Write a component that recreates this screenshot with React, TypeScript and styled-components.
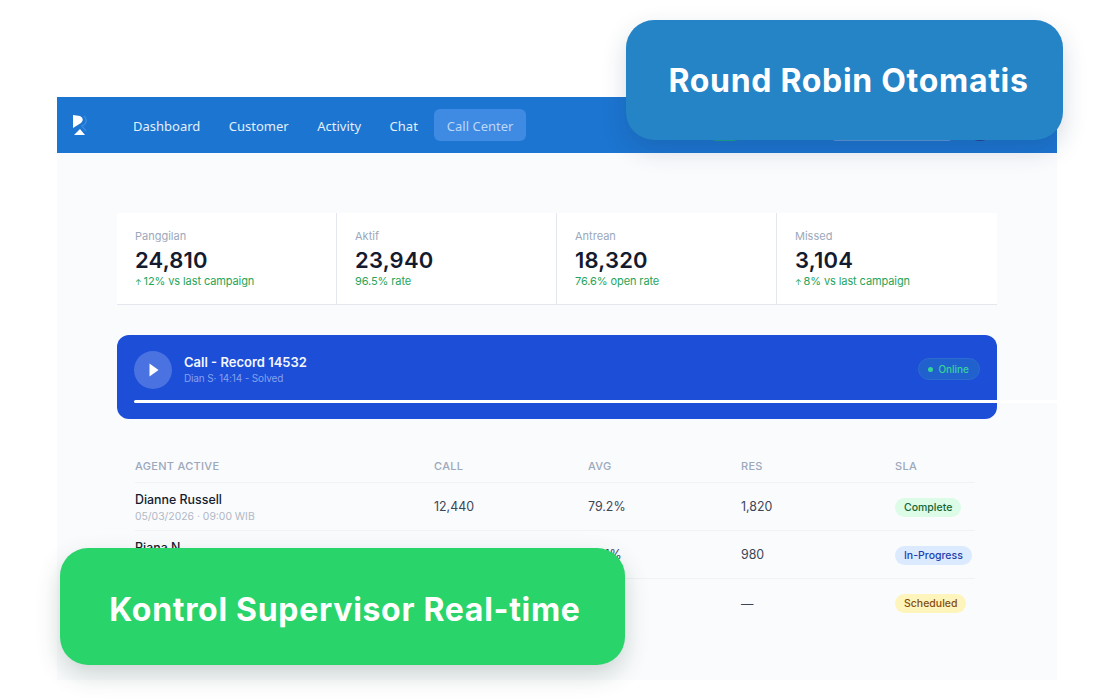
import React, { FC } from 'react';
import styled, { createGlobalStyle } from 'styled-components';

const GlobalStyle = createGlobalStyle`
  html, body {
    margin: 0;
    padding: 0;
    background: #ffffff;
  }
  * {
    box-sizing: border-box;
  }
`;

const Stage = styled.div`
  position: relative;
  width: 1120px;
  height: 700px;
  padding: 97px 63px 20px 57px;
  overflow: hidden;
  background: #ffffff;
  font-family: Inter, "Liberation Sans", sans-serif;
`;

const Frame = styled.div`
  height: 583px;
  background: #fafbfd;
  overflow: hidden;
`;

const NavBar = styled.div`
  display: flex;
  align-items: center;
  height: 56px;
  padding: 0 61px 0 15px;
  background: #1c75d0;
`;

const Logo = styled.svg`
  width: 16px;
  height: 22px;
  margin-right: 33px;
`;

const NavLinks = styled.nav`
  display: flex;
  align-items: center;
  gap: 4.5px;
`;

const NavLink = styled.a<{ $active?: boolean }>`
  height: 32px;
  padding: 0 ${(p) => (p.$active ? '12.5px' : '12px')};
  border-radius: 6px;
  background: ${(p) => (p.$active ? '#3f8be3' : 'transparent')};
  color: ${(p) => (p.$active ? '#bcd8f7' : '#e3effb')};
  font-family: "Noto Sans", sans-serif;
  font-size: 13px;
  line-height: 34px;
`;

const NavRight = styled.div`
  display: flex;
  align-items: center;
  margin-left: auto;
`;

const StatusChip = styled.div`
  width: 30px;
  height: 32px;
  border-radius: 6px;
  background: #1aa38f;
`;

const SearchBox = styled.div`
  width: 120px;
  height: 32px;
  margin-left: 92px;
  border-radius: 4px;
  background: #5d96dc;
`;

const Avatar = styled.div`
  width: 32px;
  height: 32px;
  margin-left: 12px;
  border-radius: 50%;
  background: #27408f;
`;

const Content = styled.main`
  padding: 60px 60px 0;
`;

const StatRow = styled.section`
  display: grid;
  grid-template-columns: repeat(4, 1fr);
  height: 92px;
  background: #ffffff;
  border-bottom: 1px solid #e4e8ee;
`;

const StatCard = styled.div`
  padding: 16px 18px 0;
  border-right: 1px solid #e4e8ee;
  &:last-child {
    border-right: 0;
  }
`;

const StatLabel = styled.div`
  color: #9ca8bb;
  font-size: 11px;
  line-height: 14px;
`;

const StatValue = styled.div`
  margin-top: 4px;
  color: #141b2e;
  font-size: 22px;
  font-weight: 600;
  line-height: 26px;
  letter-spacing: 0.2px;
`;

const StatNote = styled.div`
  margin-top: 1px;
  color: #26a55a;
  font-size: 11px;
  line-height: 14px;
  letter-spacing: -0.1px;
`;

const NoteArrow = styled.span`
  margin-right: 2px;
  font-size: 8px;
`;

const Player = styled.section`
  margin-top: 30px;
  height: 84px;
  padding: 16px 17px 0;
  border-radius: 12px;
  background: #1c4ed8;
`;

const PlayerTop = styled.div`
  display: flex;
  align-items: center;
`;

const PlayButton = styled.div`
  display: flex;
  align-items: center;
  justify-content: center;
  width: 38px;
  height: 38px;
  padding-left: 2px;
  border-radius: 50%;
  background: #4a72e0;
`;

const PlayerInfo = styled.div`
  flex: 1;
  margin: -2px 0 0 12px;
`;

const PlayerTitle = styled.div`
  color: #f4f7ff;
  font-size: 13px;
  font-weight: 600;
  line-height: 17px;
`;

const PlayerMeta = styled.div`
  margin-top: 1px;
  color: #86a1ec;
  font-size: 10px;
  line-height: 13px;
  letter-spacing: -0.15px;
`;

const OnlineBadge = styled.div`
  display: flex;
  align-items: center;
  gap: 5px;
  height: 22px;
  margin-top: -2px;
  padding: 0 10px 0 9px;
  border: 1px solid #2c6bd0;
  border-radius: 11px;
  background: #2161cd;
  color: #34d399;
  font-size: 10px;
  font-weight: 500;
  &::before {
    content: '';
    width: 5px;
    height: 5px;
    border-radius: 50%;
    background: #34d399;
  }
`;

const Progress = styled.div`
  width: calc(100% + 77px);
  height: 3px;
  margin-top: 11px;
  border-radius: 2px 0 0 2px;
  background: #ffffff;
`;

const Table = styled.section`
  margin: 30px 22px 0 18px;
`;

const Row = styled.div`
  display: grid;
  grid-template-columns: 299px 154px 153px 154px 1fr;
  align-items: center;
  height: 48px;
  border-bottom: 1px solid #f0f2f6;
  color: #3c4557;
  font-size: 12.4px;
  &:last-child {
    border-bottom: 0;
  }
`;

const HeaderRow = styled(Row)`
  height: 34px;
  color: #9ca8bb;
  font-size: 11px;
  font-weight: 500;
  letter-spacing: 0.3px;
`;

const AgentName = styled.div`
  min-height: 16px;
  margin-top: 2px;
  color: #141b2e;
  font-size: 12.4px;
  font-weight: 500;
  line-height: 16px;
`;

const AgentDate = styled.div`
  min-height: 14px;
  margin-top: 2px;
  color: #b0b8c6;
  font-size: 10.4px;
  line-height: 14px;
`;

const tones = {
  green: { bg: '#dcfce7', fg: '#166534' },
  blue: { bg: '#dbeafe', fg: '#1e40af' },
  yellow: { bg: '#fef5bd', fg: '#854d0e' },
};

const SlaPill = styled.span<{ $tone: keyof typeof tones }>`
  justify-self: start;
  margin-top: 1px;
  padding: 0 9px;
  border-radius: 10px;
  background: ${(p) => tones[p.$tone].bg};
  color: ${(p) => tones[p.$tone].fg};
  font-size: 10.5px;
  font-weight: 500;
  line-height: 19px;
`;

const Callout = styled.div`
  position: absolute;
  display: flex;
  align-items: center;
  justify-content: center;
  border-radius: 28px;
  color: #ffffff;
  font-family: Inter, sans-serif;
  font-size: 32px;
  font-weight: 700;
  letter-spacing: 0.7px;
`;

const BlueCallout = styled(Callout)`
  top: 20px;
  left: 626px;
  width: 437px;
  height: 120px;
  padding-left: 8px;
  background: #2484c6;
  box-shadow: 0 10px 24px rgba(20, 50, 90, 0.18);
`;

const GreenCallout = styled(Callout)`
  top: 548px;
  left: 60px;
  width: 565px;
  height: 117px;
  padding: 5px 0 0 5px;
  background: #29d46b;
  box-shadow: 0 10px 24px rgba(20, 60, 40, 0.2);
`;

const stats = [
  { label: 'Panggilan', value: '24,810', note: '12% vs last campaign', up: true },
  { label: 'Aktif', value: '23,940', note: '96.5% rate', up: false },
  { label: 'Antrean', value: '18,320', note: '76.6% open rate', up: false },
  { label: 'Missed', value: '3,104', note: '8% vs last campaign', up: true },
];

const agents = [
  { name: 'Dianne Russell', date: '05/03/2026 · 09:00 WIB', call: '12,440', avg: '79.2%', res: '1,820', sla: 'Complete', tone: 'green' as const },
  { name: 'Riana N', date: '', call: '', avg: '74.1%', res: '980', sla: 'In-Progress', tone: 'blue' as const },
  { name: '', date: '', call: '', avg: '', res: '—', sla: 'Scheduled', tone: 'yellow' as const },
];

const App: FC = () => {
  return (
    <Stage>
      <GlobalStyle />
      <Frame>
        <NavBar>
          <Logo viewBox="0 0 16 22">
            <path d="M1 1 L8 2 Q13 5 9 9 L1 14 Z" fill="#ffffff" />
            <path d="M2 21 L8 15 L13 21 Z" fill="#ffffff" />
            <path d="M12 2 Q16 6 13 10 L10 12 L14 17" fill="none" stroke="#3a8ae0" strokeWidth="1.5" />
          </Logo>
          <NavLinks>
            <NavLink>Dashboard</NavLink>
            <NavLink>Customer</NavLink>
            <NavLink>Activity</NavLink>
            <NavLink>Chat</NavLink>
            <NavLink $active>Call Center</NavLink>
          </NavLinks>
          <NavRight>
            <StatusChip />
            <SearchBox />
            <Avatar />
          </NavRight>
        </NavBar>
        <Content>
          <StatRow>
            {stats.map((s) => (
              <StatCard key={s.label}>
                <StatLabel>{s.label}</StatLabel>
                <StatValue>{s.value}</StatValue>
                <StatNote>
                  {s.up && <NoteArrow>↑</NoteArrow>}
                  {s.note}
                </StatNote>
              </StatCard>
            ))}
          </StatRow>
          <Player>
            <PlayerTop>
              <PlayButton>
                <svg width="10" height="14" viewBox="0 0 10 14">
                  <path d="M0.5 0.5 L9.5 7 L0.5 13.5 Z" fill="#ffffff" />
                </svg>
              </PlayButton>
              <PlayerInfo>
                <PlayerTitle>Call - Record 14532</PlayerTitle>
                <PlayerMeta>Dian S· 14:14 - Solved</PlayerMeta>
              </PlayerInfo>
              <OnlineBadge>Online</OnlineBadge>
            </PlayerTop>
            <Progress />
          </Player>
          <Table>
            <HeaderRow>
              <span>AGENT ACTIVE</span>
              <span>CALL</span>
              <span>AVG</span>
              <span>RES</span>
              <span>SLA</span>
            </HeaderRow>
            {agents.map((a) => (
              <Row key={a.sla}>
                <div>
                  <AgentName>{a.name}</AgentName>
                  <AgentDate>{a.date}</AgentDate>
                </div>
                <span>{a.call}</span>
                <span>{a.avg}</span>
                <span>{a.res}</span>
                <SlaPill $tone={a.tone}>{a.sla}</SlaPill>
              </Row>
            ))}
          </Table>
        </Content>
      </Frame>
      <BlueCallout>Round Robin Otomatis</BlueCallout>
      <GreenCallout>Kontrol Supervisor Real-time</GreenCallout>
    </Stage>
  );
};

export default App;
